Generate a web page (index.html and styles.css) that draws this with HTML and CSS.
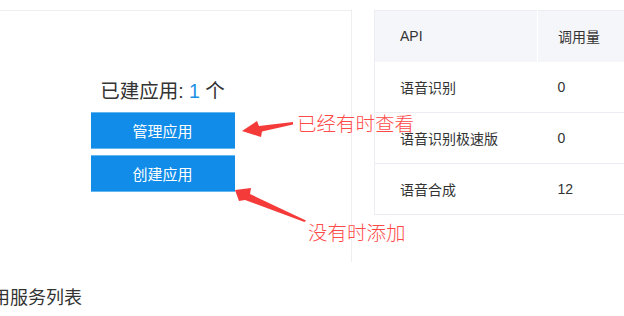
FILE: index.html
```html
<!DOCTYPE html>
<html lang="zh-CN">
<head>
    <meta charset="UTF-8">
    <meta name="viewport" content="width=device-width, initial-scale=1.0">
    <title>应用服务</title>

    <link rel="stylesheet" href="styles.css">

</head>
<body>

    <div class="page">
        <div class="topo">
            <div class="cartao">
                <p class="contagem">已建应用: <span class="num">1</span> 个</p>
                <button class="botao">管理应用</button>
                <button class="botao">创建应用</button>
            </div>

            <table class="uso">
                <tr>
                    <th class="colApi">API</th>
                    <th>调用量</th>
                </tr>
                <tr>
                    <td class="colApi">语音识别</td>
                    <td>0</td>
                </tr>
                <tr>
                    <td class="colApi">语音识别极速版</td>
                    <td>0</td>
                </tr>
                <tr>
                    <td class="colApi">语音合成</td>
                    <td>12</td>
                </tr>
            </table>
        </div>

        <h3 class="titulo">应用服务列表</h3>
    </div>

    <!-- anotacoes por cima da tela -->
    <svg class="setas" width="624" height="316" viewBox="0 0 624 316">
        <polygon points="242,131 257,121 259,126 293,122 293,124.5 262,131.5 261,137"/>
        <polygon points="235,190 251,188 250,194 306,220.5 304.5,222 245,200 239,201"/>
    </svg>
    <span class="nota nota1">已经有时查看</span>
    <span class="nota nota2">没有时添加</span>

</body>
</html>
```

FILE: styles.css
```css
@charset "utf-8";

*{
    padding: 0px;
    margin: 0px;
}
body{
    background-color: #fff;
    font-family: "Liberation Sans", "Noto Sans CJK SC", sans-serif;
    color: #333;
    overflow: hidden;
}
.page{
    margin-left: -26px;
    padding-top: 10px;
}
.topo{
    display: flex;
    align-items: flex-start;
    gap: 22px;
}
.cartao{
    box-sizing: border-box;
    width: 378px;
    height: 252px;
    flex-shrink: 0;
    border-top: 1px solid #eeeeee;
    border-right: 1px solid #eeeeee;
    display: flex;
    flex-direction: column;
    align-items: center;
    padding-top: 68px;
}
.contagem{
    font-size: 19.5px;
    line-height: 24px;
    color: #333;
    margin-bottom: 9px;
}
.contagem .num{
    color: #1a8fe8;
}
.botao{
    width: 144px;
    height: 37px;
    margin-bottom: 6px;
    background-color: #118de9;
    color: white;
    font-family: "Noto Sans CJK SC", sans-serif;
    font-size: 15px;
    border: none;
    border-top: 1px solid #64b6f1;
    border-bottom: 1px solid #64b6f1;
}
.uso{
    border-collapse: collapse;
    width: 420px;
    flex-shrink: 0;
    font-size: 14px;
    color: #333;
    border: 1px solid #ebedf3;
}
.uso tr{
    height: 51px;
}
.uso th{
    background-color: #f5f6fa;
    font-weight: normal;
    text-align: left;
    padding-left: 20px;
    border-right: 1px solid #fff;
}
.uso td{
    padding-left: 20px;
    border-bottom: 1px solid #ebedf3;
}
.uso .colApi{
    width: 137px;
    padding-left: 25px;
}
.titulo{
    font-size: 18px;
    line-height: 24px;
    font-weight: normal;
    color: #333;
    margin-top: 24px;
}
.setas{
    position: absolute;
    top: 0;
    left: 0;
    fill: #f53a3a;
    pointer-events: none;
}
.nota{
    position: absolute;
    font-family: "Noto Sans CJK SC", serif;
    font-weight: 300;
    font-size: 19.5px;
    line-height: 20px;
    color: #ff4a4a;
}
.nota1{
    left: 297px;
    top: 113px;
}
.nota2{
    left: 308px;
    top: 222px;
}
```
